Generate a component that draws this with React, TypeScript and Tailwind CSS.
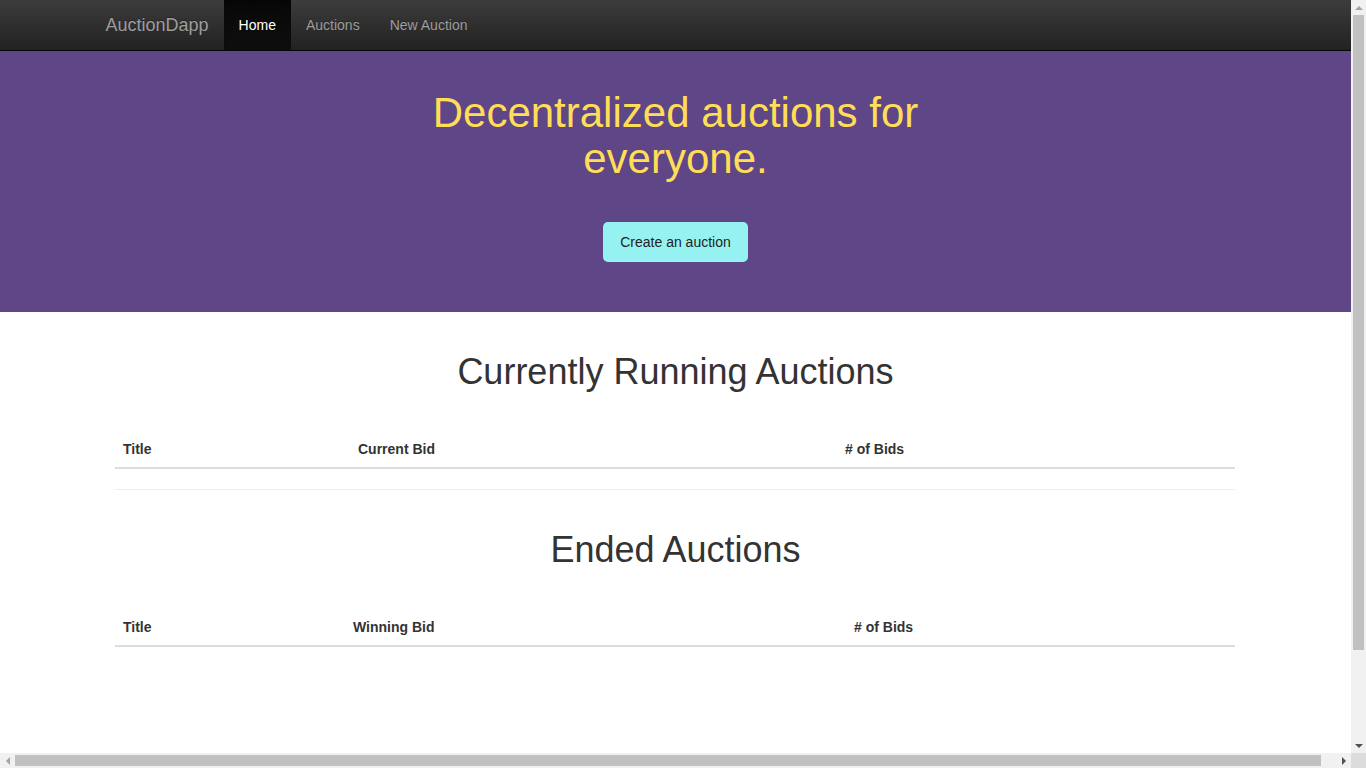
import React from 'react';

type Column = { label: string; width: string };

const NavLink: React.FC<{ label: string; active?: boolean }> = ({ label, active }) => (
  <a
    href="#"
    className={
      active
        ? 'block px-[15px] leading-[50px] text-[14px] text-white bg-gradient-to-b from-[#080808] to-[#0f0f0f] shadow-[inset_0_3px_9px_rgba(0,0,0,0.25)]'
        : 'block px-[15px] leading-[50px] text-[14px] text-[#9d9d9d] [text-shadow:0_-1px_0_rgba(0,0,0,0.25)]'
    }
  >
    {label}
  </a>
);

const AuctionTable: React.FC<{ columns: Column[] }> = ({ columns }) => (
  <table className="w-[1120px] ml-[115px] border-collapse text-[14px] text-[#333]">
    <thead>
      <tr className="border-b-2 border-[#ddd]">
        {columns.map((c) => (
          <th key={c.label} className={`${c.width} p-2 text-left font-bold leading-5`}>
            {c.label}
          </th>
        ))}
      </tr>
    </thead>
    <tbody />
  </table>
);

// small triangle for the scrollbar buttons
const Arrow: React.FC<{ dir: 'up' | 'down' | 'left' | 'right'; color: string }> = ({ dir, color }) => {
  const pts = {
    up: '0,4 4,0 8,4',
    down: '0,0 8,0 4,4',
    left: '4,0 4,8 0,4',
    right: '0,0 0,8 4,4',
  }[dir];
  const vertical = dir === 'up' || dir === 'down';
  return (
    <svg width={vertical ? 8 : 4} height={vertical ? 4 : 8} viewBox={vertical ? '0 0 8 4' : '0 0 4 8'}>
      <polygon points={pts} fill={color} />
    </svg>
  );
};

const Page = () => (
  <div className="w-[1351px] h-[753px] overflow-hidden bg-white">
    {/* Navbar */}
    <nav className="h-[51px] border-b border-[#080808] bg-gradient-to-b from-[#3c3c3c] to-[#222]">
      <div className="w-[1170px] mx-auto px-[15px] flex">
        <a href="#" className="block pr-[15px] leading-[50px] text-[18px] text-[#9d9d9d] [text-shadow:0_-1px_0_rgba(0,0,0,0.25)]">
          AuctionDapp
        </a>
        <NavLink label="Home" active />
        <NavLink label="Auctions" />
        <NavLink label="New Auction" />
      </div>
    </nav>

    {/* Hero */}
    <section className="h-[261px] bg-[#5f4687] pt-[39px] flex flex-col items-center">
      <h1 className="w-[555px] text-center text-[42px] leading-[46px] text-[#ffdd57]">
        Decentralized auctions for everyone.
      </h1>
      <button className="mt-[40px] h-10 px-[17px] rounded-[5px] bg-[#96f2f0] text-[14px] text-[#222]">
        Create an auction
      </button>
    </section>

    {/* Running */}
    <h1 className="mt-[40px] mb-[39px] text-center text-[36px] leading-[40px]">Currently Running Auctions</h1>
    <AuctionTable
      columns={[
        { label: 'Title', width: 'w-[235px]' },
        { label: 'Current Bid', width: 'w-[487px]' },
        { label: '# of Bids', width: 'w-[398px]' },
      ]}
    />
    <hr className="w-[1120px] ml-[115px] mt-5 border-0 border-t border-[#eee]" />

    {/* Ended */}
    <h1 className="mt-[40px] mb-[39px] text-center text-[36px] leading-[40px]">Ended Auctions</h1>
    <AuctionTable
      columns={[
        { label: 'Title', width: 'w-[230px]' },
        { label: 'Winning Bid', width: 'w-[501px]' },
        { label: '# of Bids', width: 'w-[389px]' },
      ]}
    />
  </div>
);

export default function App() {
  return (
    <div className="w-[1366px] h-[768px] overflow-hidden flex flex-col font-['Liberation_Sans',Arial,sans-serif] text-[#333]">
      <div className="flex">
        <Page />
        {/* vertical scrollbar */}
        <div className="w-[15px] h-[753px] bg-[#f1f1f1] flex flex-col items-center">
          <div className="h-[15px] flex items-center justify-center">
            <Arrow dir="up" color="#a3a3a3" />
          </div>
          <div className="w-[11px] h-[635px] bg-[#c1c1c1]" />
          <div className="flex-1" />
          <div className="h-[15px] flex items-center justify-center">
            <Arrow dir="down" color="#505050" />
          </div>
        </div>
      </div>
      {/* horizontal scrollbar */}
      <div className="h-[15px] flex bg-[#f1f1f1]">
        <div className="w-[15px] flex items-center justify-center">
          <Arrow dir="left" color="#a3a3a3" />
        </div>
        <div className="w-[1306px] flex items-center">
          <div className="w-full h-[11px] bg-[#c1c1c1]" />
        </div>
        <div className="flex-1" />
        <div className="w-[15px] flex items-center justify-center">
          <Arrow dir="right" color="#505050" />
        </div>
        <div className="w-[15px] bg-[#dcdcdc]" />
      </div>
    </div>
  );
}
